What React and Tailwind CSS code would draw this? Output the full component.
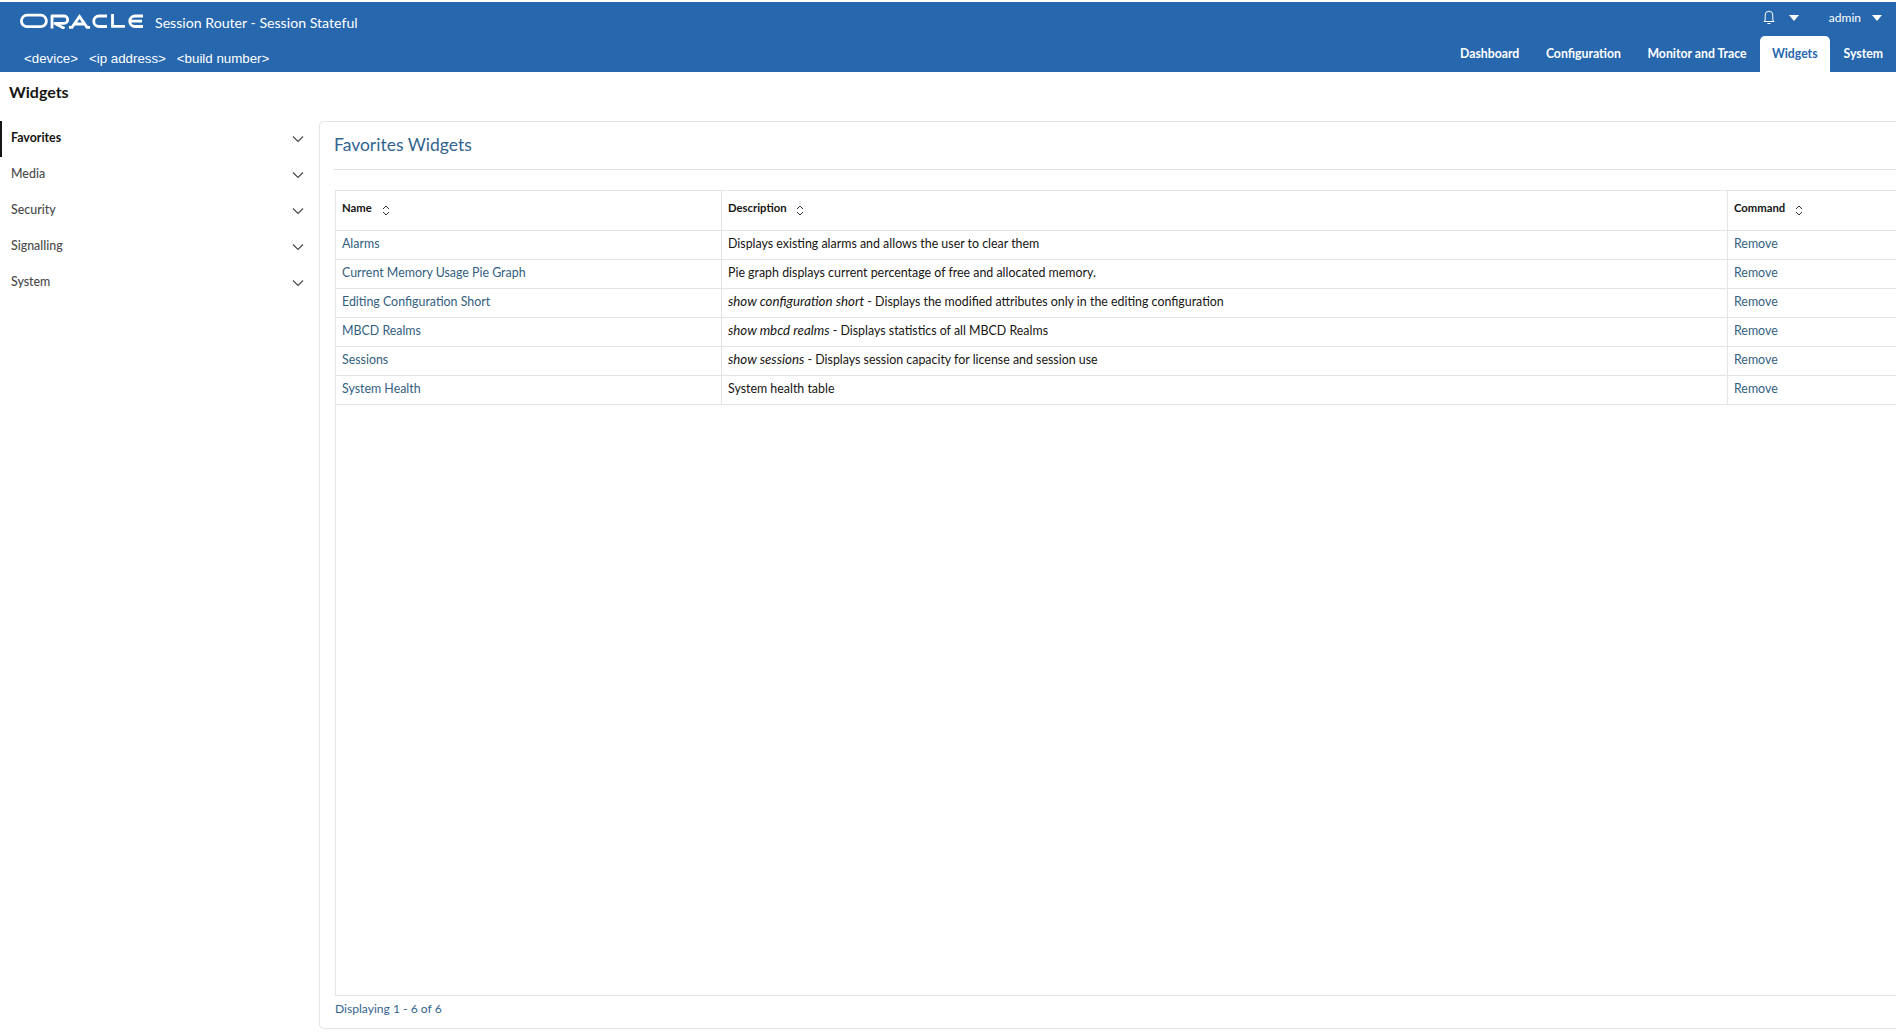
import React from "react";

const Chevron = () => (
  <svg width="12" height="8" viewBox="0 0 12 8" fill="none" stroke="#4a4a4a" strokeWidth="1.2"><path d="M1 1.5 L6 6.5 L11 1.5" /></svg>
);
const Sort = () => (
  <svg width="8" height="11" viewBox="0 0 8 11" fill="none" stroke="#333" strokeWidth="1"><path d="M1 4 L4 1 L7 4" /><path d="M1 7 L4 10 L7 7" /></svg>
);
const Caret = () => (
  <svg width="10" height="6" viewBox="0 0 10 6" fill="#fff"><path d="M0 0 H10 L5 6 Z" /></svg>
);
const Logo = () => (
  <svg width="123" height="16" viewBox="0 0 123 16" fill="none" stroke="#fff" strokeWidth="2.8">
    <rect x="1.4" y="2.2" width="25" height="11.4" rx="5.7" />
    <path d="M32 15.5 V3 H44 a3.6 3.6 0 0 1 0 7.4 H35 L44.5 15.5" strokeLinejoin="round" />
    <path d="M49 14.3 H52 L59.5 3.5 L67 14.3 H70 M54 11 H64" />
    <path d="M87 3 H79 a5 5 0 0 0 0 10.5 H87" />
    <path d="M92.5 1 V13.4 H105" />
    <path d="M123 3 H115 a5 5 0 0 0 0 10.5 H123 M110.5 8.2 H122" />
  </svg>
);
const Bell = () => (
  <svg width="12" height="15" viewBox="0 0 12 15" fill="none" stroke="#fff" strokeWidth="1"><path d="M1 11.5 H11 L9.8 10 V5 a3.8 3.8 0 0 0 -7.6 0 V10 Z" /><path d="M4.5 13.5 H7.5" /></svg>
);

const side = ["Favorites", "Media", "Security", "Signalling", "System"];
const rows = [
  ["Alarms", null, "Displays existing alarms and allows the user to clear them"],
  ["Current Memory Usage Pie Graph", null, "Pie graph displays current percentage of free and allocated memory."],
  ["Editing Configuration Short", "show configuration short", " - Displays the modified attributes only in the editing configuration"],
  ["MBCD Realms", "show mbcd realms", " - Displays statistics of all MBCD Realms"],
  ["Sessions", "show sessions", " - Displays session capacity for license and session use"],
  ["System Health", null, "System health table"],
];
const tabs = ["Dashboard", "Configuration", "Monitor and Trace"];

export default function App() {
  return (
    <div className="w-[1896px] h-[1032px] overflow-hidden bg-white pt-[2px] flex flex-col font-['Lato',sans-serif]">
      <header className="h-[70px] bg-[#2767ae] flex justify-between text-white shrink-0">
        <div className="pl-[20px] flex flex-col">
          <div className="flex items-center h-[42px]">
            <span className="-mt-[4px]"><Logo /></span>
            <span className="ml-[12px] text-[14.15px]">Session Router - Session Stateful</span>
          </div>
          <div className="flex gap-[11px] pl-[4px] text-[13.3px] font-['Liberation_Sans',sans-serif] mt-[5px]">
            <span>&lt;device&gt;</span><span>&lt;ip address&gt;</span><span>&lt;build number&gt;</span>
          </div>
        </div>
        <div className="flex flex-col items-end">
          <div className="flex items-center h-[34px] pb-[3px] pr-[14px]">
            <span className="mr-[2px]"><Bell /></span>
            <span className="ml-[12px]"><Caret /></span>
            <span className="ml-[30px] text-[12px]">admin</span>
            <span className="ml-[11px]"><Caret /></span>
          </div>
          <nav className="flex items-stretch h-[36px] text-[12.25px] font-bold">
            {tabs.map((t) => (
              <span key={t} className="flex items-center px-[13.3px]">{t}</span>
            ))}
            <span className="flex items-center px-[12px] bg-white text-[#2767ae] rounded-t-[5px]">Widgets</span>
            <span className="flex items-center pl-[14px] pr-[13px]">System</span>
          </nav>
        </div>
      </header>

      <main className="flex-1 flex flex-col min-h-0">
        <h1 className="h-[49px] pl-[9px] pt-[8px] text-[16px] font-bold text-[#161513] shrink-0">Widgets</h1>
        <div className="flex-1 flex min-h-0 pb-[3px]">
          <aside className="w-[319px] shrink-0">
            {side.map((s, i) => (
              <div key={s} className={`h-[36px] flex items-center justify-between pl-[11px] pr-[15px] text-[12.4px] border-l-[2px] ${i === 0 ? "border-[#161513] font-bold text-[#161513]" : "border-transparent font-medium text-[#4a4a4a]"}`}>
                <span className="-ml-[2px] -mt-[2px]">{s}</span>
                <Chevron />
              </div>
            ))}
          </aside>
          <section className="flex-1 min-w-0 border-l border-t border-b border-[#e4e4e2] rounded-tl-[5px] rounded-bl-[5px] pl-[14px] flex flex-col">
            <div className="h-[48px] shrink-0 border-b border-[#dfdfdd] flex items-center text-[17.5px] text-[#33648f]">Favorites Widgets</div>
            <div className="mt-[20px] ml-[1px] flex-1 flex flex-col min-h-0 border-l border-t border-b border-[#e4e4e2]">
              <div className="flex h-[40px] border-b border-[#e4e4e2] text-[11.3px] font-bold text-[#161513] shrink-0">
                <div className="w-[386px] border-r border-[#e4e4e2] pl-[6px] pt-[9px] flex gap-[10px] items-start"><span>Name</span><span className="mt-[5px]"><Sort /></span></div>
                <div className="w-[1006px] border-r border-[#e4e4e2] pl-[6px] pt-[9px] flex gap-[9px] items-start"><span>Description</span><span className="mt-[5px]"><Sort /></span></div>
                <div className="flex-1 pl-[6px] pt-[9px] flex gap-[10px] items-start"><span>Command</span><span className="mt-[5px]"><Sort /></span></div>
              </div>
              {rows.map((r) => (
                <div key={r[0]} className="flex h-[29px] border-b border-[#e4e4e2] text-[12.4px] shrink-0">
                  <div className="w-[386px] border-r border-[#e4e4e2] pl-[6px] pb-[2px] flex items-center text-[#336080]">{r[0]}</div>
                  <div className="w-[1006px] border-r border-[#e4e4e2] pl-[6px] pb-[2px] flex items-center text-[#161513]">
                    <span className="whitespace-pre">{r[1] && <em className="text-[13.3px]">{r[1]}</em>}{r[2]}</span>
                  </div>
                  <div className="flex-1 pl-[6px] pb-[2px] flex items-center text-[#336080]">Remove</div>
                </div>
              ))}
            </div>
            <div className="h-[32px] shrink-0 flex items-start pt-[4px] ml-[1px] text-[12.1px] text-[#33648f]">Displaying 1 - 6 of 6</div>
          </section>
        </div>
      </main>
    </div>
  );
}
